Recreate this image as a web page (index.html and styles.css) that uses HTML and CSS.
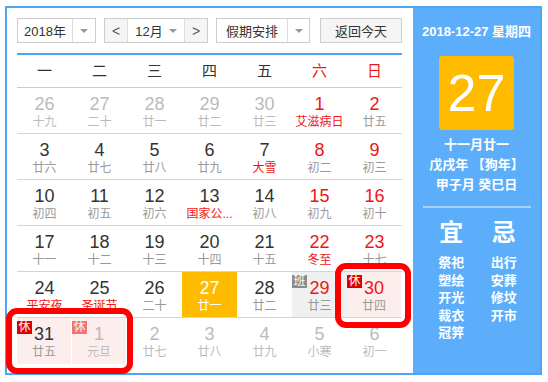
FILE: index.html
```html
<!DOCTYPE html>
<html lang="zh-CN">

<head>
    <meta charset="UTF-8">
    <meta name="viewport" content="width=device-width, initial-scale=1.0">
    <link rel="stylesheet" href="styles.css">
</head>

<body>
    <div class="calendar">
        <div class="main">
            <div class="toolbar">
                <div class="select year">
                    <span class="label">2018年</span>
                    <span class="drop"><i class="caret"></i></span>
                </div>
                <div class="select month">
                    <span class="step prev">&lt;</span>
                    <span class="label">12月 <i class="caret"></i></span>
                    <span class="step next">&gt;</span>
                </div>
                <div class="select holiday">
                    <span class="label">假期安排</span>
                    <span class="drop"><i class="caret"></i></span>
                </div>
                <div class="select back">返回今天</div>
            </div>

            <div class="week">
                <span>一</span><span>二</span><span>三</span><span>四</span><span>五</span>
                <span class="weekend">六</span><span class="weekend">日</span>
            </div>

            <div class="days">
                <div class="day other"><b>26</b><span>十九</span></div>
                <div class="day other"><b>27</b><span>二十</span></div>
                <div class="day other"><b>28</b><span>廿一</span></div>
                <div class="day other"><b>29</b><span>廿二</span></div>
                <div class="day other"><b>30</b><span>廿三</span></div>
                <div class="day weekend"><b>1</b><span class="fest">艾滋病日</span></div>
                <div class="day weekend"><b>2</b><span>廿五</span></div>

                <div class="day"><b>3</b><span>廿六</span></div>
                <div class="day"><b>4</b><span>廿七</span></div>
                <div class="day"><b>5</b><span>廿八</span></div>
                <div class="day"><b>6</b><span>廿九</span></div>
                <div class="day"><b>7</b><span class="fest">大雪</span></div>
                <div class="day weekend"><b>8</b><span>初二</span></div>
                <div class="day weekend"><b>9</b><span>初三</span></div>

                <div class="day"><b>10</b><span>初四</span></div>
                <div class="day"><b>11</b><span>初五</span></div>
                <div class="day"><b>12</b><span>初六</span></div>
                <div class="day"><b>13</b><span class="fest">国家公...</span></div>
                <div class="day"><b>14</b><span>初八</span></div>
                <div class="day weekend"><b>15</b><span>初九</span></div>
                <div class="day weekend"><b>16</b><span>初十</span></div>

                <div class="day"><b>17</b><span>十一</span></div>
                <div class="day"><b>18</b><span>十二</span></div>
                <div class="day"><b>19</b><span>十三</span></div>
                <div class="day"><b>20</b><span>十四</span></div>
                <div class="day"><b>21</b><span>十五</span></div>
                <div class="day weekend"><b>22</b><span class="fest">冬至</span></div>
                <div class="day weekend"><b>23</b><span>十七</span></div>

                <div class="day"><b>24</b><span class="fest">平安夜</span></div>
                <div class="day"><b>25</b><span class="fest">圣诞节</span></div>
                <div class="day"><b>26</b><span>二十</span></div>
                <div class="day today"><b>27</b><span>廿一</span></div>
                <div class="day"><b>28</b><span>廿二</span></div>
                <div class="day weekend work"><i class="tag">班</i><b>29</b><span>廿三</span></div>
                <div class="day weekend rest"><i class="tag">休</i><b>30</b><span>廿四</span></div>

                <div class="day rest"><i class="tag">休</i><b>31</b><span>廿五</span></div>
                <div class="day other rest"><i class="tag">休</i><b>1</b><span>元旦</span></div>
                <div class="day other"><b>2</b><span>廿七</span></div>
                <div class="day other"><b>3</b><span>廿八</span></div>
                <div class="day other"><b>4</b><span>廿九</span></div>
                <div class="day other"><b>5</b><span>小寒</span></div>
                <div class="day other"><b>6</b><span>初一</span></div>
            </div>
        </div>

        <div class="side">
            <div class="side-date">2018-12-27 星期四</div>
            <div class="big-day">27</div>
            <div class="lunar-info">
                <p>十一月廿一</p>
                <p>戊戌年 【狗年】</p>
                <p>甲子月 癸巳日</p>
            </div>
            <div class="divider"></div>
            <div class="yiji">
                <div class="yiji-col">
                    <h3>宜</h3>
                    <p>祭祀</p>
                    <p>塑绘</p>
                    <p>开光</p>
                    <p>裁衣</p>
                    <p>冠笄</p>
                </div>
                <div class="yiji-col">
                    <h3>忌</h3>
                    <p>出行</p>
                    <p>安葬</p>
                    <p>修坟</p>
                    <p>开市</p>
                </div>
            </div>
        </div>
    </div>

    <div class="mark mark-rest"></div>
    <div class="mark mark-newyear"></div>
</body>

</html>
```

FILE: styles.css
```css
:root {
    --border-blue: #4ea5f5;
    --panel-blue: #5daefa;
    --text-primary: #333333;
    --text-lunar: #999999;
    --text-other: #bbbbbb;
    --red: #f01414;
    --today: #ffbb00;
    --line: #d4d4d4;
}

body {
    margin: 0;
    position: relative;
    background: #ffffff;
    font-family: "Liberation Sans", "Noto Sans CJK SC", sans-serif;
    color: var(--text-primary);
}

p,
h3 {
    margin: 0;
}

.calendar {
    display: flex;
    width: 537px;
    height: 369px;
    margin: 6px 0 0 5px;
    border: 2px solid var(--border-blue);
    box-sizing: border-box;
}

.main {
    width: 406px;
    padding: 10px 11px 0 10px;
    box-sizing: border-box;
    background: #ffffff;
}

/* toolbar */

.toolbar {
    display: flex;
    height: 25px;
    margin-bottom: 10px;
}

.select {
    display: flex;
    align-items: center;
    height: 25px;
    border: 1px solid #cccccc;
    box-sizing: border-box;
    font-size: 13px;
    color: var(--text-primary);
    background: #ffffff;
}

.select .label {
    display: flex;
    align-items: center;
    justify-content: center;
    gap: 6px;
    height: 100%;
}

.drop {
    flex: 1;
    height: 100%;
    display: flex;
    align-items: center;
    justify-content: center;
    border-left: 1px solid #dddddd;
}

.caret {
    display: inline-block;
    width: 0;
    height: 0;
    border-left: 4px solid transparent;
    border-right: 4px solid transparent;
    border-top: 4px solid #999999;
}

.year {
    width: 79px;
    margin-right: 8px;
}

.year .label {
    width: 54px;
}

.month {
    width: 104px;
    margin-right: 8px;
}

.month .label {
    flex: 1;
}

.step {
    width: 22px;
    height: 100%;
    display: flex;
    align-items: center;
    justify-content: center;
    background: #f5f5f5;
    font-size: 14px;
    color: #555555;
}

.prev {
    border-right: 1px solid #dddddd;
}

.next {
    border-left: 1px solid #dddddd;
}

.holiday {
    width: 94px;
    margin-right: 10px;
}

.holiday .label {
    width: 70px;
}

.back {
    width: 82px;
    justify-content: center;
    background: #f5f5f5;
}

/* week header */

.week {
    display: grid;
    grid-template-columns: repeat(7, 55px);
    height: 32px;
    border-top: 2px solid var(--border-blue);
    border-bottom: 1px solid #cccccc;
    font-size: 15px;
    line-height: 32px;
    text-align: center;
}

.week .weekend {
    color: var(--red);
}

/* days */

.days {
    display: grid;
    grid-template-columns: repeat(7, 55px);
    grid-auto-rows: 46px;
}

.day {
    position: relative;
    padding-top: 6px;
    box-sizing: border-box;
    border-bottom: 1px solid var(--line);
    text-align: center;
}

.day:nth-last-child(-n+7) {
    border-bottom: none;
}

.day b {
    display: block;
    font-size: 18px;
    font-weight: normal;
    line-height: 20px;
    color: var(--text-primary);
}

.day span {
    display: block;
    font-size: 12px;
    line-height: 16px;
    color: var(--text-lunar);
    white-space: nowrap;
}

.day.weekend b,
.day .fest {
    color: var(--red);
}

.day.other b,
.day.other span {
    color: var(--text-other);
}

.day.today {
    background: var(--today);
}

.day.today b,
.day.today span {
    color: #ffffff;
}

.day.rest {
    background: #fdeeee;
    border-right: 1px solid #ffffff;
}

.day.work {
    background: #f0f0f0;
}

.tag {
    position: absolute;
    top: 3px;
    left: 0;
    width: 15px;
    height: 13px;
    font-style: normal;
    font-size: 12px;
    line-height: 13px;
    color: #ffffff;
    background: #dd0000;
}

.work .tag {
    background: #8c8c8c;
}

.other .tag {
    opacity: 0.5;
}

/* side panel */

.side {
    flex: 1;
    background: var(--panel-blue);
    color: #ffffff;
    text-align: center;
    font-weight: bold;
}

.side-date {
    padding-top: 16px;
    font-size: 13px;
    line-height: 16px;
}

.big-day {
    width: 75px;
    height: 74px;
    margin: 16px auto 0;
    background: var(--today);
    border-radius: 3px;
    font-size: 52px;
    font-weight: normal;
    line-height: 74px;
}

.lunar-info {
    margin-top: 5px;
    font-size: 13px;
    line-height: 20px;
}

.divider {
    height: 2px;
    margin: 11px 9px 0 10px;
    background: rgba(255, 255, 255, 0.45);
}

.yiji {
    display: grid;
    grid-template-columns: 1fr 1fr;
    padding: 0 10px 0 12px;
}

.yiji h3 {
    margin: 11px 0 7px;
    font-size: 24px;
    font-weight: bold;
    line-height: 28px;
}

.yiji p {
    font-size: 13px;
    line-height: 17.5px;
}

/* annotation marks */

.mark {
    position: absolute;
    border: 6px solid #ff0000;
    border-radius: 11px;
    box-sizing: border-box;
}

.mark-rest {
    left: 335px;
    top: 263px;
    width: 76px;
    height: 65px;
}

.mark-newyear {
    left: 6px;
    top: 308px;
    width: 127px;
    height: 66px;
}
```
